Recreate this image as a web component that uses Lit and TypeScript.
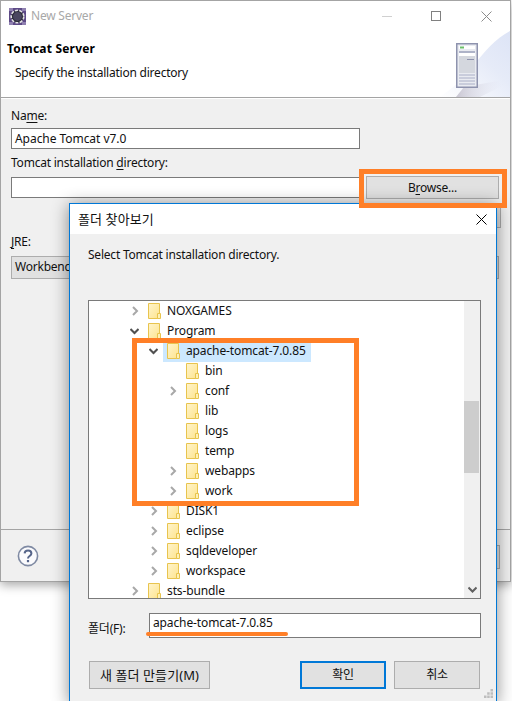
import { LitElement, html, css, svg } from 'lit';
import { customElement } from 'lit/decorators.js';

type Expander = 'none' | 'closed' | 'open';
interface TreeRow {
  name: string;
  level: number;
  expander: Expander;
  selected?: boolean;
}

const TREE: TreeRow[] = [
  { name: 'NOXGAMES', level: 0, expander: 'closed' },
  { name: 'Program', level: 0, expander: 'open' },
  { name: 'apache-tomcat-7.0.85', level: 1, expander: 'open', selected: true },
  { name: 'bin', level: 2, expander: 'none' },
  { name: 'conf', level: 2, expander: 'closed' },
  { name: 'lib', level: 2, expander: 'none' },
  { name: 'logs', level: 2, expander: 'none' },
  { name: 'temp', level: 2, expander: 'none' },
  { name: 'webapps', level: 2, expander: 'closed' },
  { name: 'work', level: 2, expander: 'closed' },
  { name: 'DISK1', level: 1, expander: 'closed' },
  { name: 'eclipse', level: 1, expander: 'closed' },
  { name: 'sqldeveloper', level: 1, expander: 'closed' },
  { name: 'workspace', level: 1, expander: 'closed' },
  { name: 'sts-bundle', level: 0, expander: 'closed' },
];

const folderIcon = html`<svg class="folder" width="13" height="16" viewBox="0 0 13 16">
  <defs>
    <linearGradient id="fg" x1="0" y1="0" x2="1" y2="1">
      <stop offset="0" stop-color="#fff4cc" />
      <stop offset="1" stop-color="#fde48f" />
    </linearGradient>
  </defs>
  <path d="M.5.5h11v15H.5z" fill="url(#fg)" stroke="#e8c44e" />
  <path d="M9.5 10.5h3v5h-3z" fill="#fdf0b8" stroke="#e8c44e" />
</svg>`;

const chevronClosed = svg`<path d="M1 1l4 4-4 4" fill="none" stroke="#a8a8a8" stroke-width="2" />`;
const chevronOpen = svg`<path d="M.5 1l4 4 4-4" fill="none" stroke="#505050" stroke-width="2" />`;

@customElement('app-root')
export class AppRoot extends LitElement {
  static styles = css`
    :host {
      display: block;
      position: relative;
      width: 512px;
      height: 701px;
      overflow: hidden;
      background: #fff;
      color: #111;
      font: 12px/16px 'Noto Sans', 'Noto Sans CJK KR', sans-serif;
      letter-spacing: -0.22px;
    }
    u {
      text-underline-offset: 2px;
    }
    .ko {
      font-size: 13px;
      letter-spacing: 0.1px;
    }

    /* back window */
    .server {
      position: absolute;
      left: 0;
      top: 0;
      width: 511px;
      height: 582px;
      box-sizing: border-box;
      display: flex;
      flex-direction: column;
      border: 1px solid #a4a4a4;
      background: #f0f0f0;
      box-shadow: 0 3px 10px rgba(0, 0, 0, 0.35);
    }
    .titlebar {
      display: flex;
      align-items: center;
      height: 30px;
      flex-shrink: 0;
      background: #fff;
      color: #a8a8a8;
      padding-left: 8px;
      gap: 5px;
    }
    .titlebar .spacer {
      flex: 1;
    }
    .winbtn {
      display: block;
    }
    .winbtn.min {
      margin-right: 34px;
    }
    .winbtn.max {
      margin-right: 35px;
    }
    .winbtn.close {
      margin-right: 18px;
    }
    .banner {
      position: relative;
      flex-shrink: 0;
      height: 66px;
      background: #fff;
      border-bottom: 1px solid #a4a4a4;
      box-shadow: 0 1px 0 #fff;
    }
    .banner h1 {
      margin: 0;
      padding: 10px 0 0 6px;
      font-size: 12px;
      line-height: 16px;
      font-weight: 700;
      color: #000;
      letter-spacing: 0.2px;
    }
    .banner p {
      margin: 0;
      padding: 8px 0 0 14px;
    }
    .banner .art {
      position: absolute;
      right: 0;
      top: 0;
    }
    .form {
      flex: 1;
      display: flex;
      flex-direction: column;
      align-items: flex-start;
      padding: 10px 10px 0 10px;
    }
    .form .label {
      height: 20px;
    }
    .field {
      box-sizing: border-box;
      width: 349px;
      height: 21px;
      border: 1px solid #7a7a7a;
      background: #fff;
      padding: 1px 3px;
      line-height: 17px;
      white-space: nowrap;
      letter-spacing: -0.05px;
    }
    .dir-label {
      margin-top: 6px;
      height: 21px;
    }
    .dir-row {
      display: flex;
      align-items: center;
      gap: 6px;
      height: 23px;
    }
    .btn {
      box-sizing: border-box;
      display: flex;
      align-items: center;
      justify-content: center;
      border: 1px solid #adadad;
      background: #e1e1e1;
      color: #111;
      white-space: nowrap;
    }
    .btn.browse {
      width: 133px;
      height: 23px;
    }
    .btn.jres {
      align-self: flex-end;
      margin: 6px -1px 0 0;
      width: 133px;
      height: 23px;
    }
    .jre-label {
      margin-top: 6px;
      height: 22px;
    }
    .combo {
      box-sizing: border-box;
      width: 488px;
      height: 23px;
      border: 1px solid #adadad;
      background: #e1e1e1;
      padding: 2px 3px;
    }
    .footer {
      flex-shrink: 0;
      display: flex;
      align-items: center;
      justify-content: space-between;
      height: 52px;
      border-top: 1px solid #a4a4a4;
      padding: 0 10px 0 16px;
      box-sizing: border-box;
    }
    .footer .btn {
      width: 100px;
      height: 24px;
      margin-top: 2px;
    }

    /* folder dialog */
    .dialog {
      position: absolute;
      left: 69px;
      top: 203px;
      width: 428px;
      height: 500px;
      box-sizing: border-box;
      display: flex;
      flex-direction: column;
      border: 1px solid #0078d7;
      background: #f0f0f0;
      box-shadow: 0 2px 16px rgba(0, 0, 0, 0.45);
    }
    .dlg-title {
      flex-shrink: 0;
      display: flex;
      align-items: center;
      justify-content: space-between;
      height: 30px;
      padding: 0 9px 0 8px;
      background: #fff;
      color: #111;
    }
    .dlg-text {
      margin: 13px 0 0 18px;
      height: 53px;
    }
    .tree-box {
      box-sizing: border-box;
      display: flex;
      margin-left: 18px;
      width: 393px;
      height: 299px;
      border: 1px solid #7a7a7a;
      background: #fff;
      flex-shrink: 0;
    }
    .tree {
      flex: 1;
      overflow: hidden;
      letter-spacing: -0.12px;
    }
    .row {
      display: flex;
      align-items: center;
      height: 20px;
      white-space: nowrap;
    }
    .expander {
      flex: 0 0 17px;
      display: flex;
      align-items: center;
      padding-left: 1px;
      box-sizing: border-box;
    }
    .item {
      display: flex;
      align-items: center;
      gap: 6px;
      height: 20px;
      padding: 0 5px 0 4px;
      margin-left: -4px;
    }
    .item.selected {
      height: 21px;
      background: #cce8ff;
    }
    .scrollbar {
      box-sizing: border-box;
      flex: 0 0 16px;
      display: flex;
      flex-direction: column;
      justify-content: flex-end;
      align-items: center;
      position: relative;
      background: #f0f0f0;
      padding-bottom: 5px;
    }
    .thumb {
      position: absolute;
      left: 0;
      right: 1px;
      top: 100px;
      height: 72px;
      background: #cdcdcd;
    }
    .folder-row {
      display: flex;
      align-items: center;
      margin: 14px 0 0 18px;
      height: 25px;
    }
    .folder-row .name {
      width: 61px;
      padding-top: 7px;
    }
    .folder-row .field {
      width: 332px;
      height: 25px;
      line-height: 18px;
      padding: 0 3px;
      letter-spacing: -0.12px;
    }
    .dlg-actions {
      display: flex;
      margin: 23px 0 0 19px;
      width: 391px;
    }
    .dlg-actions .btn {
      height: 28px;
      width: 86px;
    }
    .dlg-actions .make {
      width: 121px;
      margin-right: auto;
    }
    .dlg-actions .ok {
      border: 2px solid #0078d7;
      margin-right: 8px;
    }
    .grip {
      position: absolute;
      right: 3px;
      bottom: 4px;
    }

    /* annotations drawn over the screenshot */
    .mark {
      position: absolute;
      box-sizing: border-box;
      border: 5px solid #ff7f27;
    }
    .mark.browse {
      left: 359px;
      top: 169px;
      width: 148px;
      height: 39px;
    }
    .mark.tree-mark {
      left: 132px;
      top: 338px;
      width: 227px;
      height: 168px;
    }
    .stroke {
      position: absolute;
      left: 146px;
      top: 632px;
      width: 142px;
      height: 4px;
      border-radius: 2px;
      background: #ff7f27;
    }
  `;

  private renderRow(row: TreeRow) {
    const chevron =
      row.expander === 'closed'
        ? html`<svg width="7" height="10" viewBox="0 0 7 10">${chevronClosed}</svg>`
        : row.expander === 'open'
          ? html`<svg width="9" height="7" viewBox="0 0 9 7" style="margin-left:-2px">${chevronOpen}</svg>`
          : null;
    return html`
      <div class="row" style="padding-left:${42 + row.level * 19}px">
        <span class="expander">${chevron}</span>
        <span class="item ${row.selected ? 'selected' : ''}">${folderIcon}<span>${row.name}</span></span>
      </div>
    `;
  }

  private renderAppIcon() {
    return html`<svg width="17" height="17" viewBox="0 0 17 17">
      <rect width="17" height="17" fill="#5d4a86" />
      <path d="M0 0h4v3H0zM13 0h4v3h-4zM0 14h4v3H0zM13 14h4v3h-4z" fill="#8f80b0" />
      <circle cx="8.5" cy="8.5" r="6.3" fill="#2d2d3a" stroke="#e4e4e4" stroke-width="1.6" stroke-dasharray="3 1.4" />
      <circle cx="8.5" cy="8.5" r="4.4" fill="#4a4660" />
    </svg>`;
  }

  private renderBannerArt() {
    return html`<svg class="art" width="72" height="66" viewBox="0 0 72 66">
      <defs>
        <linearGradient id="wash" x1="0" y1="1" x2="1" y2="0">
          <stop offset="0" stop-color="#fff" />
          <stop offset="0.6" stop-color="#e6ebf8" />
          <stop offset="1" stop-color="#dde4f6" />
        </linearGradient>
        <linearGradient id="shade" x1="0" y1="0" x2="1" y2="0">
          <stop offset="0" stop-color="#c9c6d2" />
          <stop offset="1" stop-color="#e6e9f5" stop-opacity="0" />
        </linearGradient>
      </defs>
      <path d="M0 66C30 52 42 16 72 0v66z" fill="url(#wash)" />
      <path d="M26 56l34-6 6 4-24 12H18z" fill="url(#shade)" />
      <rect x="18.5" y="12.5" width="21" height="44" fill="#e9ebf1" stroke="#8e93ae" />
      <rect x="19" y="13" width="20" height="43" fill="none" stroke="#8e93ae" />
      <rect x="21" y="15" width="16" height="3" fill="#fff" />
      <rect x="22" y="15.5" width="4" height="2" fill="#6cc06a" />
      <rect x="21" y="20" width="16" height="2" fill="#aeb3c8" />
      <rect x="21" y="22" width="16" height="3" fill="#fff" />
      <rect x="21" y="25" width="16" height="17" fill="#d4d7de" />
      <rect x="29" y="28" width="7" height="1" fill="#8e93ae" />
      <path d="M21 44h16M21 47h16M21 50h16M21 53h16" stroke="#a9aec6" />
    </svg>`;
  }

  render() {
    return html`
      <section class="server">
        <div class="titlebar">
          ${this.renderAppIcon()}
          <span>New Server</span>
          <span class="spacer"></span>
          <svg class="winbtn min" width="10" height="10" viewBox="0 0 10 10"><path d="M0 5.5h10" stroke="#d0d0d0" /></svg>
          <svg class="winbtn max" width="10" height="10" viewBox="0 0 10 10"><rect x=".5" y=".5" width="9" height="9" fill="none" stroke="#808080" /></svg>
          <svg class="winbtn close" width="11" height="11" viewBox="0 0 11 11"><path d="M.5.5l10 10M10.5.5l-10 10" stroke="#8c8c8c" /></svg>
        </div>
        <header class="banner">
          <h1>Tomcat Server</h1>
          <p>Specify the installation directory</p>
          ${this.renderBannerArt()}
        </header>
        <div class="form">
          <div class="label">Na<u>m</u>e:</div>
          <div class="field">Apache Tomcat v7.0</div>
          <div class="dir-label">Tomcat installation <u>d</u>irectory:</div>
          <div class="dir-row">
            <div class="field"></div>
            <div class="btn browse"><span>B<u>r</u>owse...</span></div>
          </div>
          <div class="btn jres"></div>
          <div class="jre-label"><u>J</u>RE:</div>
          <div class="combo">Workbench</div>
        </div>
        <footer class="footer">
          <svg width="22" height="22" viewBox="0 0 22 22">
            <circle cx="11" cy="11" r="9.6" fill="#fbfbfd" stroke="#7f8aa3" stroke-width="1.6" />
            <path d="M7.6 8.4c.2-4 6.8-4 6.8 0 0 2.6-3.4 2.6-3.4 5" fill="none" stroke="#56658a" stroke-width="2" />
            <rect x="9.9" y="15" width="2.2" height="2.2" fill="#56658a" />
          </svg>
          <div class="btn"></div>
        </footer>
      </section>

      <section class="dialog">
        <div class="dlg-title">
          <span class="ko">폴더 찾아보기</span>
          <svg width="11" height="11" viewBox="0 0 11 11"><path d="M.5.5l10 10M10.5.5l-10 10" stroke="#000" /></svg>
        </div>
        <div class="dlg-text">Select Tomcat installation directory.</div>
        <div class="tree-box">
          <div class="tree">${TREE.map((row) => this.renderRow(row))}</div>
          <div class="scrollbar">
            <div class="thumb"></div>
            <svg width="9" height="7" viewBox="0 0 9 7"><path d="M.5 1.5l4 4 4-4" fill="none" stroke="#606060" stroke-width="2" /></svg>
          </div>
        </div>
        <div class="folder-row">
          <span class="name">폴더(F):</span>
          <div class="field">apache-tomcat-7.0.85</div>
        </div>
        <div class="dlg-actions">
          <div class="btn make ko">새 폴더 만들기(M)</div>
          <div class="btn ok">확인</div>
          <div class="btn">취소</div>
        </div>
        <svg class="grip" width="9" height="9" viewBox="0 0 9 9">
          <path d="M6.5 0h2.5v2.5H6.5zM3.2 3.2h2.5v2.5H3.2zM6.5 3.2h2.5v2.5H6.5zM0 6.5h2.5V9H0zM3.2 6.5h2.5V9H3.2zM6.5 6.5h2.5V9H6.5z" fill="#bdbdbd" />
        </svg>
      </section>

      <div class="mark browse"></div>
      <div class="mark tree-mark"></div>
      <div class="stroke"></div>
    `;
  }
}
